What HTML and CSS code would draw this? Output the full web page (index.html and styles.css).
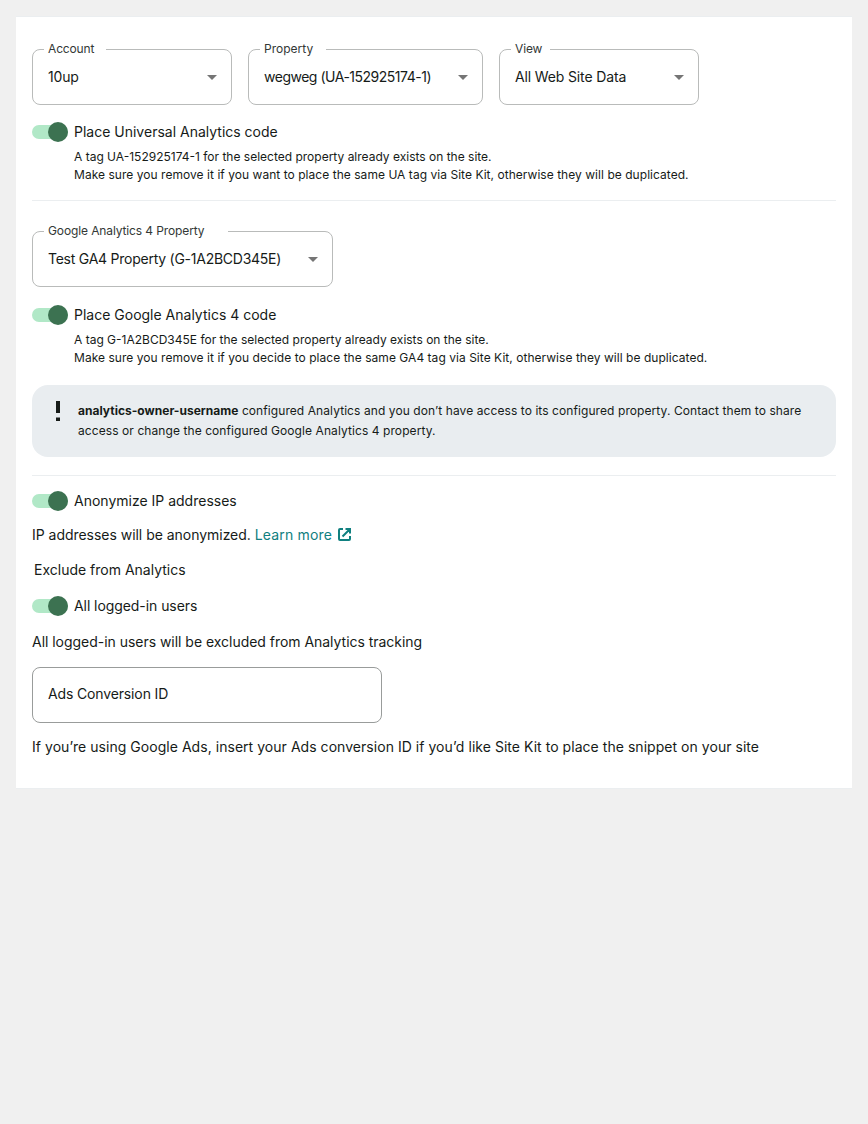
FILE: index.html
```
<!DOCTYPE html>
<html lang="en">
<head>
<meta charset="utf-8">
<title>Analytics settings</title>
<link rel="stylesheet" href="styles.css">
</head>
<body>
<main class="card">
  <div class="fields">
    <div class="select select-account"><span class="label">Account</span><span class="value">10up</span><svg class="arrow" viewBox="0 0 10 5"><path d="M0 0h10L5 5z"/></svg></div>
    <div class="select select-property"><span class="label">Property</span><span class="value">wegweg (UA-152925174-1)</span><svg class="arrow" viewBox="0 0 10 5"><path d="M0 0h10L5 5z"/></svg></div>
    <div class="select select-view"><span class="label">View</span><span class="value">All Web Site Data</span><svg class="arrow" viewBox="0 0 10 5"><path d="M0 0h10L5 5z"/></svg></div>
  </div>
  <div class="switch switch-ua"><span class="track"><span class="thumb"></span></span><span>Place Universal Analytics code</span></div>
  <p class="hint"><span>A tag UA-152925174-1 for the selected property already exists on the site.</span><br><span class="hint-more">Make sure you remove it if you want to place the same UA tag via Site Kit, otherwise they will be duplicated.</span></p>
  <div class="divider divider-ua"></div>
  <div class="fields fields-ga4">
    <div class="select select-ga4"><span class="label">Google Analytics 4 Property</span><span class="value">Test GA4 Property (G-1A2BCD345E)</span><svg class="arrow" viewBox="0 0 10 5"><path d="M0 0h10L5 5z"/></svg></div>
  </div>
  <div class="switch switch-ga4"><span class="track"><span class="thumb"></span></span><span>Place Google Analytics 4 code</span></div>
  <p class="hint"><span>A tag G-1A2BCD345E for the selected property already exists on the site.</span><br><span class="hint-more">Make sure you remove it if you decide to place the same GA4 tag via Site Kit, otherwise they will be duplicated.</span></p>
  <div class="notice">
    <svg class="bang" viewBox="0 0 4 20"><path d="M0 0h4v12H0zM0 16.5h4V20H0z"/></svg>
    <p class="notice-text"><strong class="owner">analytics-owner-username</strong> configured Analytics and you don’t have access to its configured property. Contact them to share<br>access or change the configured Google Analytics 4 property.</p>
  </div>
  <div class="divider divider-ga4"></div>
  <div class="switch switch-ip"><span class="track"><span class="thumb"></span></span><span>Anonymize IP addresses</span></div>
  <p class="text text-ip">IP addresses will be anonymized. <a class="link">Learn more<svg class="external" viewBox="0 0 13 13"><path d="M5 1H2Q1 1 1 2v9q0 1 1 1h9q1 0 1-1V8M7.5 1H12v4.5M12 1 4.5 8.5"/></svg></a></p>
  <p class="text legend">Exclude from Analytics</p>
  <div class="switch switch-users"><span class="track"><span class="thumb"></span></span><span>All logged-in users</span></div>
  <p class="text text-users">All logged-in users will be excluded from Analytics tracking</p>
  <div class="input"><span>Ads Conversion ID</span></div>
  <p class="text text-ads">If you’re using Google Ads, insert your Ads conversion ID if you’d like Site Kit to place the snippet on your site</p>
</main>
</body>
</html>
```
FILE: styles.css
```
* { box-sizing: border-box; }
body { margin: 0; padding: 16px; background: #f0f0f0; color: #161b18; font: 14px/20px Inter, "Liberation Sans", sans-serif; }
p { margin: 0; }
.card { height: 773px; padding: 32px 16px 0; border: solid #ebeef0; border-width: 1px 0; background: #fff; }
.fields { display: flex; gap: 16px; }
.fields-ga4 { margin-top: 30px; }
.select { position: relative; display: flex; align-items: center; justify-content: space-between; height: 56px; padding: 0 14px 0 15px; border: 1px solid #b9bbba; border-radius: 8px; white-space: nowrap; }
.select-account, .select-view { width: 200px; }
.select-account { letter-spacing: -0.15px; }
.select-view { letter-spacing: -0.14px; }
.select-property { width: 235px; }
.select-property .value { letter-spacing: -0.49px; }
.select-ga4 { width: 301px; }
.select-ga4 .value { letter-spacing: -0.25px; }
.label { position: absolute; top: -9px; left: 11px; height: 16px; padding-left: 4px; background: #fff; color: #333836; font-size: 12px; line-height: 16px; }
.select-account .label { width: 62px; }
.select-property .label { width: 66px; }
.select-view .label { width: 30px; }
.select-view .label { width: 39px; }
.select-ga4 .label { width: 184px; letter-spacing: -0.12px; }
.arrow { width: 10px; height: 5px; fill: #757575; }
.switch { display: flex; align-items: center; gap: 6px; height: 20px; }
.track { display: flex; align-items: center; justify-content: flex-end; width: 36px; height: 14px; border-radius: 7px; background: #b1e8c7; }
.thumb { flex: none; width: 20px; height: 20px; border-radius: 50%; background: #3c7251; }
.switch-ua { margin-top: 17px; }
.switch-ga4 { margin-top: 18px; }
.switch-ip { margin-top: 15px; }
.switch-users { margin-top: 16px; letter-spacing: -0.07px; }
.hint { margin: 6px 0 0 42px; font-size: 12px; line-height: 18px; white-space: nowrap; }
.hint-more { letter-spacing: 0.04px; }
.divider { height: 1px; background: #ebeef0; }
.divider-ua { margin-top: 16px; }
.divider-ga4 { margin-top: 18px; }
.notice { display: flex; gap: 18px; height: 72px; margin-top: 18px; padding: 16px 24px; border-radius: 16px; background: #e9edf0; }
.bang { width: 4px; height: 20px; fill: #161b18; }
.notice-text { font-size: 12px; line-height: 20px; letter-spacing: 0.08px; white-space: nowrap; }
.owner { letter-spacing: 0.01px; }
.text { height: 20px; white-space: nowrap; }
.text-ip { margin-top: 14px; letter-spacing: -0.03px; }
.legend { margin: 15px 0 0 2px; }
.text-users { margin-top: 16px; letter-spacing: -0.03px; }
.text-ads { margin-top: 14px; letter-spacing: 0.04px; }
.link { color: #108080; letter-spacing: 0.16px; }
.external { width: 13px; height: 13px; margin-left: 6px; vertical-align: -1px; fill: none; stroke: #108080; stroke-width: 2; }
.input { display: flex; align-items: center; width: 350px; height: 56px; margin-top: 15px; padding: 0 15px 2px; border: 1px solid #999c9b; border-radius: 8px; letter-spacing: -0.14px; }
```
